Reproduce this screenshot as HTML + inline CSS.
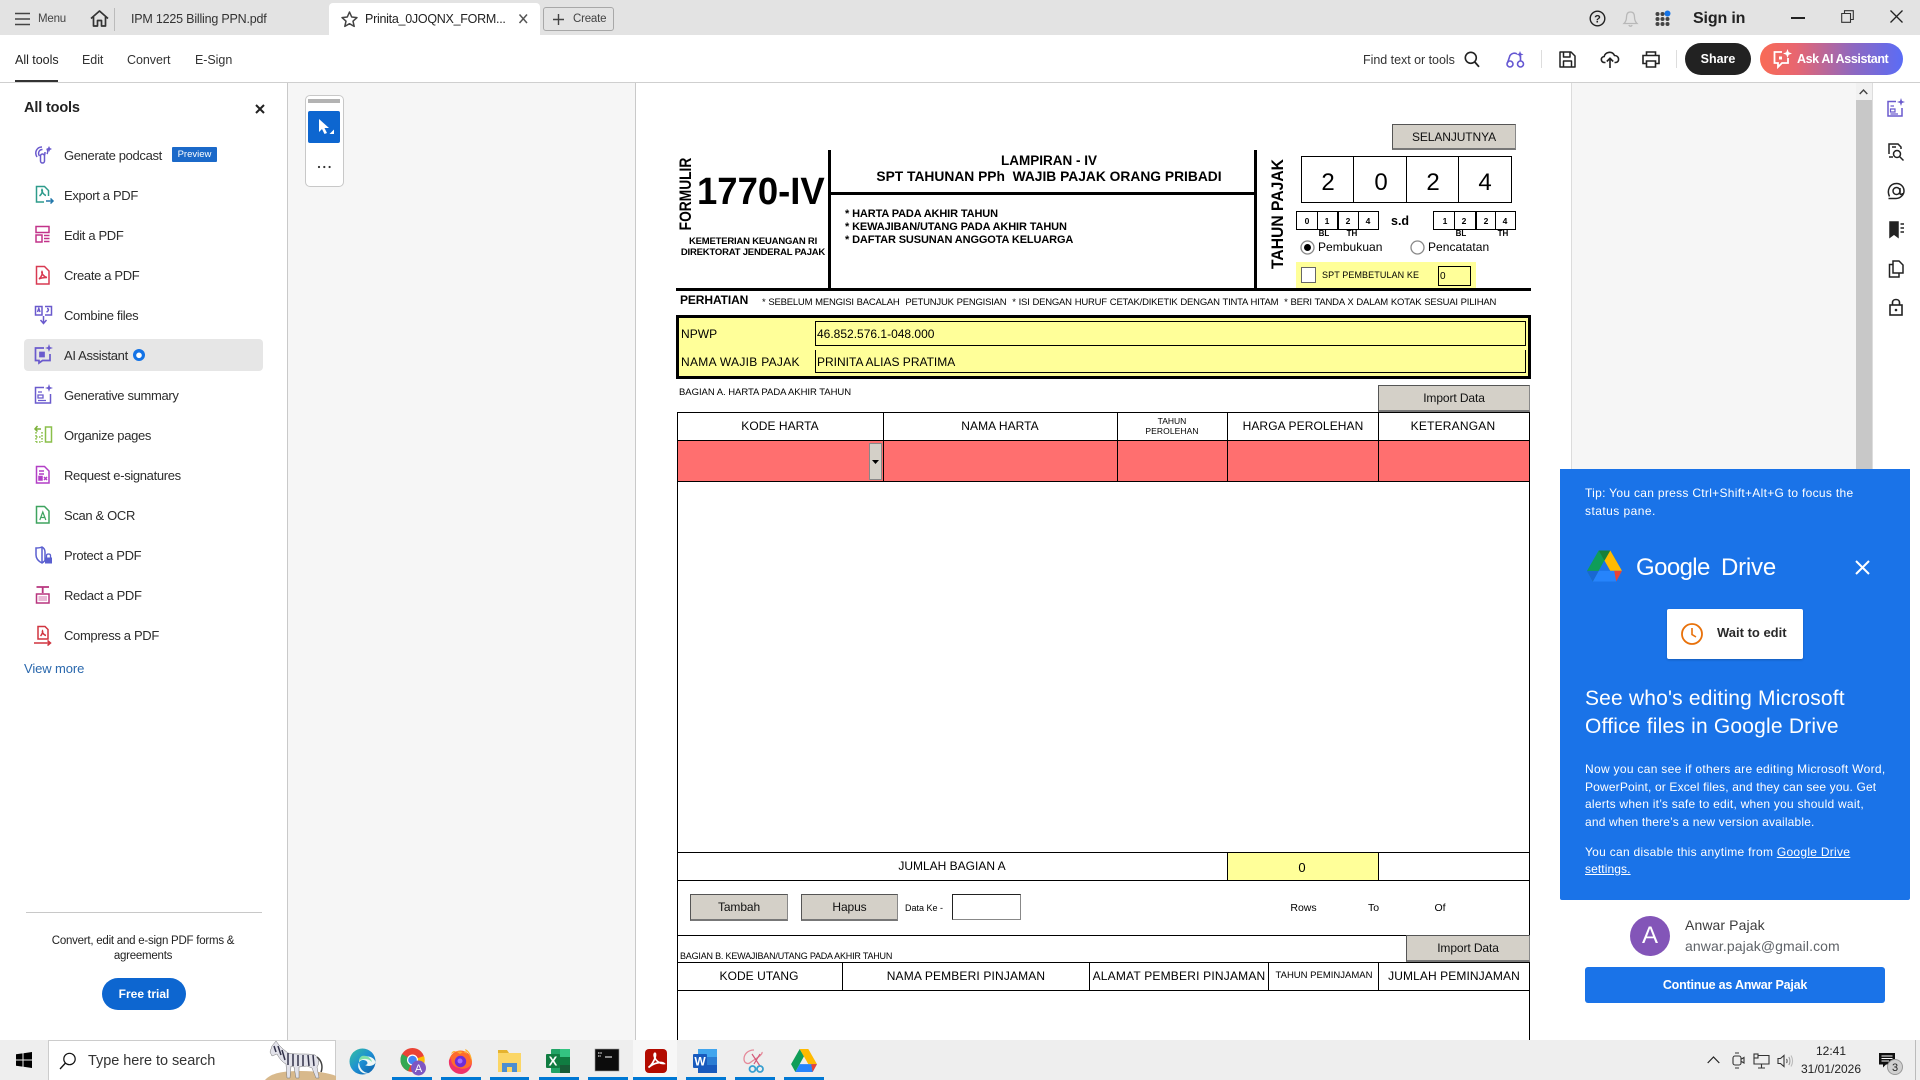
<!DOCTYPE html>
<html><head><meta charset="utf-8"><title>Acrobat</title>
<style>
*{box-sizing:border-box}
html,body{margin:0;padding:0;width:1920px;height:1080px;overflow:hidden;background:#fff;font-family:"Liberation Sans",Arial,sans-serif;color:#222}
.a{position:absolute}
.t{position:absolute;white-space:nowrap;line-height:20px;height:20px}
.c{position:absolute;white-space:nowrap;line-height:20px;height:20px;text-align:center;width:400px}
svg{position:absolute;overflow:visible}
.tool{font-size:13px;letter-spacing:-.34px;color:#2c2c2c;left:64px}
.ln{position:absolute;background:#000}
.btn{position:absolute;background:#d4d0c8;border:1px solid #555;border-bottom:2px solid #777;border-right:1px solid #888;text-align:center;font-size:12px;color:#111;letter-spacing:-.1px}
.f{color:#000}
.gd{color:#fff;font-size:12px}
.und{position:absolute;top:1077px;height:3px;background:#0078d4}
</style></head><body>

<!-- top bar -->
<div class="a" style="left:0;top:0;width:1920px;height:35px;background:#e3e3e3"></div>
<svg style="left:15px;top:12px" width="16" height="14"><path d="M0 1.5H15M0 7H15M0 12.5H15" stroke="#444" stroke-width="1.6"/></svg>
<div class="t" style="left:38px;top:9px;font-size:11.5px;letter-spacing:-.2px;color:#444">Menu</div>
<svg style="left:90px;top:10px" width="19" height="17"><path d="M1 8.5L9.5 1L18 8.5M3.5 7V16H7.5V10.5H11.5V16H15.5V7" fill="none" stroke="#333" stroke-width="1.7" stroke-linejoin="round"/></svg>
<div class="a" style="left:114px;top:8px;width:1px;height:23px;background:#bbb"></div>
<div class="t" style="left:131px;top:9px;font-size:12.5px;letter-spacing:-.2px;color:#333">IPM 1225 Billing PPN.pdf</div>
<div class="a" style="left:329px;top:3px;width:211px;height:32px;background:#fff;border-radius:4px 4px 0 0"></div>
<svg style="left:341px;top:11px" width="17" height="16"><path d="M8.5 1L10.7 6L16 6.6L12 10.2L13.2 15.4L8.5 12.7L3.8 15.4L5 10.2L1 6.6L6.3 6Z" fill="none" stroke="#444" stroke-width="1.5" stroke-linejoin="round"/></svg>
<div class="t" style="left:365px;top:9px;font-size:12.5px;letter-spacing:-.27px;color:#222">Prinita_0JOQNX_FORM...</div>
<svg style="left:519px;top:14px" width="9" height="10"><path d="M.5 .5L8 9M8 .5L.5 9" stroke="#555" stroke-width="1.5"/></svg>
<div class="a" style="left:543px;top:7px;width:71px;height:24px;border:1px solid #a8a8a8;border-radius:3px"></div>
<svg style="left:553px;top:14px" width="11" height="11"><path d="M5.5 0V11M0 5.5H11" stroke="#444" stroke-width="1.4"/></svg>
<div class="t" style="left:573px;top:9px;font-size:11.5px;letter-spacing:-.2px;color:#444">Create</div>

<!-- top right -->
<svg style="left:1589px;top:10px" width="17" height="17"><circle cx="8.5" cy="8.5" r="7.3" fill="none" stroke="#222" stroke-width="1.4"/><text x="8.5" y="12.5" font-size="11" font-weight="700" text-anchor="middle" fill="#222" font-family="Liberation Sans">?</text></svg>
<svg style="left:1623px;top:11px" width="15" height="17"><path d="M7.5 1C4.500 1 3.500 3 3.500 6C3.500 9 2.500 11 1 12.500H14C12.500 11 11.500 9 11.500 6C11.500 3 10.500 1 7.5 1ZM6 14C6.300 15.600 8.700 15.600 9 14" fill="none" stroke="#b8b8b8" stroke-width="1.3"/></svg>
<svg style="left:1655px;top:10px" width="16" height="17"><g fill="#444"><circle cx="2.5" cy="4" r="2"/><circle cx="7.5" cy="4" r="2"/><circle cx="2.5" cy="9" r="2"/><circle cx="7.5" cy="9" r="2"/><circle cx="12.5" cy="9" r="2"/><circle cx="2.5" cy="14" r="2"/><circle cx="7.5" cy="14" r="2"/><circle cx="12.5" cy="14" r="2"/></g><circle cx="12.5" cy="3.5" r="3" fill="#1473e6"/></svg>
<div class="t" style="left:1693px;top:9px;font-size:16px;font-weight:700;letter-spacing:-.15px;color:#222">Sign in</div>
<div class="a" style="left:1791px;top:17px;width:14px;height:1.5px;background:#222"></div>
<svg style="left:1841px;top:10px" width="13" height="13"><path d="M.7 3.5H9.5V12.3H.7ZM3.5 3.5V.7H12.3V9.5H9.5" fill="none" stroke="#333" stroke-width="1.1"/></svg>
<svg style="left:1890px;top:10px" width="13" height="13"><path d="M.5 .5L12.5 12.5M12.5 .5L.5 12.5" stroke="#222" stroke-width="1.3"/></svg>

<!-- toolbar -->
<div class="a" style="left:0;top:82px;width:1920px;height:1px;background:#cfcfcf"></div>
<div class="t" style="left:15px;top:49.500px;font-size:12.5px;letter-spacing:-.02px;color:#222">All tools</div>
<div class="a" style="left:15px;top:80px;width:43px;height:2px;background:#333"></div>
<div class="t" style="left:82px;top:49.500px;font-size:12.5px;letter-spacing:-.05px;color:#333">Edit</div>
<div class="t" style="left:127px;top:49.500px;font-size:12.5px;letter-spacing:-.05px;color:#333">Convert</div>
<div class="t" style="left:195px;top:49.500px;font-size:12.5px;letter-spacing:-.05px;color:#333">E-Sign</div>

<div class="t" style="left:1363px;top:49.500px;font-size:12.5px;letter-spacing:-.03px;color:#333">Find text or tools</div>
<svg style="left:1464px;top:51px" width="16" height="17"><circle cx="6.8" cy="6.8" r="5.5" fill="none" stroke="#222" stroke-width="1.6"/><path d="M10.8 11L15 15.8" stroke="#222" stroke-width="1.8"/></svg>
<svg style="left:1506px;top:50px" width="19" height="19" fill="none" stroke="#6557d2" stroke-width="1.6"><circle cx="4" cy="14" r="3"/><circle cx="14.5" cy="14" r="3"/><path d="M1.500 13L4 5.500C6 3 9 2.500 11 4M14.500 11V6"/><path d="M14 1L15 3.500L17.500 4.500L15 5.500L14 8L13 5.500L10.500 4.500L13 3.500Z" fill="#6557d2" stroke="none"/></svg>
<div class="a" style="left:1541px;top:50px;width:1px;height:18px;background:#ddd"></div>
<svg style="left:1559px;top:51px" width="17" height="17"><path d="M1 1H12L16 5V16H1ZM4.500 1V6H11V1M4.500 16V10H12.500V16" fill="none" stroke="#222" stroke-width="1.5" stroke-linejoin="round"/></svg>
<svg style="left:1600px;top:50px" width="20" height="19"><path d="M5.500 12.500H4.500C.5 12.500 .2 7 4.200 6.500C5 2 12 .5 14.500 5.500C19.500 5.500 20 12.500 15.500 12.500H14.500M10 18V8.500M6.800 11.500L10 8.300L13.200 11.500" fill="none" stroke="#222" stroke-width="1.6"/></svg>
<svg style="left:1642px;top:51px" width="18" height="17"><path d="M4.500 4.500V1H13.500V4.500M4.500 12.500H1V4.500H17V12.500H13.500M4.500 10H13.500V16H4.500Z" fill="none" stroke="#222" stroke-width="1.6"/></svg>
<div class="a" style="left:1676px;top:50px;width:1px;height:18px;background:#ddd"></div>
<div class="a" style="left:1685px;top:43px;width:66px;height:32px;border-radius:16px;background:#222;color:#fff;font-size:12.5px;font-weight:700;text-align:center;line-height:32px">Share</div>
<div class="a" style="left:1760px;top:43px;width:143px;height:32px;border-radius:16px;background:linear-gradient(90deg,#f96b55 0%,#e86670 25%,#8e68c0 65%,#5a6cf6 100%)"></div>
<svg style="left:1773px;top:49px" width="19" height="20"><path d="M9 3H1.500V14H5V18L9 14H15V9" fill="none" stroke="#fff" stroke-width="1.8"/><rect x="6" y="7.5" width="3" height="3" fill="#fff"/><path d="M14.500 0L15.700 3.300L19 4.500L15.700 5.700L14.500 9L13.300 5.700L10 4.500L13.300 3.300Z" fill="#fff"/></svg>
<div class="t" style="left:1797px;top:49px;font-size:12.5px;font-weight:700;letter-spacing:-.4px;color:#fff">Ask AI Assistant</div>

<!-- sidebar -->
<div class="a" style="left:287px;top:83px;width:1px;height:957px;background:#c9c9c9"></div>
<div class="a" style="left:288px;top:83px;width:347px;height:957px;background:#f6f6f6"></div>
<div class="a" style="left:635px;top:83px;width:1px;height:957px;background:#c9c9c9"></div>
<div class="t" style="left:24px;top:97.500px;font-size:14.5px;font-weight:700;letter-spacing:-.15px;color:#222">All tools</div>
<svg style="left:255px;top:104px" width="10" height="10"><path d="M1 1L9 9M9 1L1 9" stroke="#222" stroke-width="2"/></svg>

<div class="a" style="left:24px;top:339px;width:239px;height:32px;background:#e6e6e6;border-radius:4px"></div>

<div class="t tool" style="top:146px">Generate podcast</div>
<div class="a" style="left:172px;top:147px;width:45px;height:15px;background:#1b69c9;border-radius:1px;color:#fff;font-size:9.5px;text-align:center;line-height:15px">Preview</div>
<div class="t tool" style="top:186px">Export a PDF</div>
<div class="t tool" style="top:226px">Edit a PDF</div>
<div class="t tool" style="top:266px">Create a PDF</div>
<div class="t tool" style="top:306px">Combine files</div>
<div class="t tool" style="top:346px">AI Assistant</div>
<svg style="left:132px;top:348px" width="14" height="14"><circle cx="7" cy="7" r="6" fill="#1473e6"/><circle cx="7" cy="7.3" r="2.8" fill="#fff"/></svg>
<div class="t tool" style="top:386px">Generative summary</div>
<div class="t tool" style="top:426px">Organize pages</div>
<div class="t tool" style="top:466px">Request e-signatures</div>
<div class="t tool" style="top:506px">Scan &amp; OCR</div>
<div class="t tool" style="top:546px">Protect a PDF</div>
<div class="t tool" style="top:586px">Redact a PDF</div>
<div class="t tool" style="top:626px">Compress a PDF</div>
<div class="t" style="left:24px;top:659px;font-size:13px;letter-spacing:-.1px;color:#2a68ad">View more</div>

<!-- sidebar icons -->
<svg style="left:34px;top:145px" width="19" height="20" fill="none" stroke="#6a5acd" stroke-width="1.5"><path d="M3 12C0 7 3 2 8 2M5.500 11C3.500 8 5 4.500 8.500 4.500"/><rect x="6.5" y="9" width="4" height="9" rx="2"/><path d="M11 7C11 9 11 10 10 11M13 9C14 7 14 6 13 4"/><path d="M15 1L16 3L18 4L16 5L15 7L14 5L12 4L14 3Z" fill="#6a5acd" stroke="none"/></svg>
<svg style="left:35px;top:185px" width="19" height="20" fill="none" stroke="#2d9b8b" stroke-width="1.5"><path d="M9 17H1.500V1.500H9.500L13.500 5.500V11"/><path d="M4.500 11C7 9 8 6 7 4.500C6 6 9 10 11 10.500"/><path d="M11 16H18M15.500 13.500L18 16L15.500 18.500" stroke="#2277aa"/></svg>
<svg style="left:35px;top:225px" width="16" height="20" fill="none" stroke="#c2338a" stroke-width="1.5"><rect x="1" y="1.5" width="13" height="6"/><rect x="1" y="10" width="6" height="7"/><path d="M9 10.500H14.500M9 13.500H14.500M9 16.500H14.500"/></svg>
<svg style="left:35px;top:265px" width="16" height="21" fill="none" stroke="#d83a52" stroke-width="1.5"><path d="M1.500 1.500H9.500L14 6V19H1.500Z"/><path d="M4 14C6.500 12 8 8 7 6.500C6 8 9 12 12 12.500C9.500 12.500 6 13 4 14Z"/></svg>
<svg style="left:34px;top:305px" width="19" height="21" fill="none" stroke="#6a5acd" stroke-width="1.5"><path d="M8 10H1.500V1.500H8ZM11 1.500H17.500V10H11"/><path d="M9.500 11V18M6.500 15L9.500 18.500L12.500 15"/><path d="M3.500 7L4.800 3.500L6 7M12.500 7C15 6 15 3.500 13 3.500"/></svg>
<svg style="left:34px;top:344px" width="19" height="21" fill="none" stroke="#6a5acd" stroke-width="1.7"><path d="M10 4H1.500V16.500H5V19L8.500 16.500H16V10"/><rect x="6" y="8.5" width="4" height="4" fill="#6a5acd"/><path d="M15 0L16 3L19 4L16 5L15 8L14 5L11 4L14 3Z" fill="#6a5acd" stroke="none"/></svg>
<svg style="left:34px;top:384px" width="19" height="21" fill="none" stroke="#6a5acd" stroke-width="1.5"><path d="M10 3.500H1.500V19H16.500V10"/><path d="M4 8H8M4 11H9V14H4ZM4 16.500H12" stroke-width="1.3"/><path d="M15 0L16 3L19 4L16 5L15 8L14 5L11 4L14 3Z" fill="#6a5acd" stroke="none"/></svg>
<svg style="left:34px;top:424px" width="19" height="20" fill="none" stroke="#8abf4a" stroke-width="1.5"><rect x="11.5" y="3" width="6" height="15"/><path d="M2 18H8M2 8V18M8 8V18M2 13H8" stroke-dasharray="1.6 1.4"/><path d="M1 5H7M3.500 2L1 5L3.500 7.500" stroke="#7cb13a"/></svg>
<svg style="left:35px;top:465px" width="16" height="20" fill="none" stroke="#b23fc6" stroke-width="1.5"><path d="M1.500 1.500H9.500L14 6V18H1.500Z"/><path d="M4 6H9M4 9H9"/><rect x="4" y="11.5" width="3" height="3.5" fill="#b23fc6"/><path d="M9 12L12 15M12 12L9 15"/></svg>
<svg style="left:35px;top:505px" width="16" height="20" fill="none" stroke="#3ea35f" stroke-width="1.5"><path d="M1.500 1.500H9.500L14 6V18H1.500Z"/><path d="M4.800 15L7.800 7L10.800 15M5.800 12.500H9.800" stroke-width="1.2"/></svg>
<svg style="left:34px;top:545px" width="19" height="20" fill="none" stroke="#5a5fd0" stroke-width="1.5"><path d="M8 2C6 3 4 3 2 3V10C2 13 4 16 8 18C9.500 17 11 16 11 15V7C11 5 10 3 8 2ZM8 2V18"/><rect x="11" y="12.5" width="7" height="6" fill="#5a5fd0" stroke="none"/><path d="M12.500 12.500V10.500C12.500 8.500 16.500 8.500 16.500 10.500V12.500" stroke-width="1.3"/></svg>
<svg style="left:35px;top:585px" width="16" height="20" fill="none" stroke="#b8357f" stroke-width="1.5"><path d="M1.500 2H14M7.700 2V8" stroke-width="1.8"/><rect x="1.5" y="9" width="12.5" height="9"/><rect x="3.5" y="11" width="8.5" height="5" fill="#eab8d6" stroke="none"/></svg>
<svg style="left:34px;top:625px" width="18" height="21" fill="none" stroke="#d0343f" stroke-width="1.5"><path d="M4 1.500H11L14 4.500V14H4Z"/><path d="M6.500 11C8 9.500 9 7 8.500 6C8 7 9.500 10 12 10.500"/><path d="M0 18H16M13.500 15.500L16.500 18L13.500 20.500"/></svg>

<!-- sidebar bottom -->
<div class="a" style="left:26px;top:912px;width:236px;height:1px;background:#c8c8c8"></div>
<div class="c" style="left:-57px;top:930.500px;font-size:11.5px;letter-spacing:-.24px;color:#222">Convert, edit and e-sign PDF forms &amp;</div>
<div class="c" style="left:-57px;top:945.500px;font-size:11.5px;letter-spacing:-.24px;color:#222">agreements</div>
<div class="a" style="left:102px;top:978px;width:84px;height:32px;border-radius:16px;background:#0d66d0;color:#fff;font-size:12px;font-weight:700;text-align:center;line-height:32px">Free trial</div>

<!-- floating tools -->
<div class="a" style="left:305px;top:95px;width:39px;height:92px;background:#fff;border:1px solid #c8c8c8;border-radius:5px"></div>
<div class="a" style="left:308px;top:99px;width:32px;height:4px;background:#b3b3b3"></div>
<div class="a" style="left:308px;top:111px;width:32px;height:32px;background:#0d66d0;border-radius:2px"></div>
<svg style="left:318px;top:118px" width="18" height="20"><path d="M1 1V14L4 11L6.500 16L9 15L6.500 10H11Z" fill="#fff"/><path d="M16 16V11.500L11.500 16Z" fill="#fff"/></svg>
<svg style="left:317px;top:165px" width="15" height="4"><circle cx="2" cy="2" r="1.1" fill="#333"/><circle cx="7.3" cy="2" r="1.1" fill="#333"/><circle cx="12.6" cy="2" r="1.1" fill="#333"/></svg>

<!-- right panel -->
<div class="a" style="left:636px;top:83px;width:935px;height:957px;background:#fff"></div>
<div class="a" style="left:1571px;top:83px;width:1px;height:957px;background:#dcdcdc"></div>
<div class="a" style="left:1572px;top:83px;width:284px;height:957px;background:#f6f6f6"></div>
<div class="a" style="left:1856px;top:83px;width:16px;height:957px;background:#f1f1f1"></div>
<div class="a" style="left:1856px;top:100px;width:16px;height:400px;background:#c8c8c8"></div>
<svg style="left:1859px;top:89px" width="9" height="6"><path d="M.7 5L4.500 1L8.300 5" fill="none" stroke="#444" stroke-width="1.4"/></svg>
<div class="a" style="left:1872px;top:83px;width:1px;height:957px;background:#ddd"></div>

<!-- right rail icons -->
<svg style="left:1887px;top:98px" width="18" height="20" fill="none" stroke="#6a5acd" stroke-width="1.5"><path d="M9 3.500H1V18H15V10"/><path d="M3.500 8H7M3.500 11H8V14H3.500ZM3.500 16H11" stroke-width="1.2"/><path d="M14 0L15 3L18 4L15 5L14 8L13 5L10 4L13 3Z" fill="#6a5acd" stroke="none"/></svg>
<svg style="left:1887px;top:142px" width="18" height="20" fill="none" stroke="#222" stroke-width="1.5"><path d="M2 12V2H11L14 5V7M5 5H9M2 15H6"/><circle cx="10" cy="12" r="3.5"/><path d="M12.500 14.500L16.500 18.500"/></svg>
<svg style="left:1887px;top:182px" width="18" height="18" fill="none" stroke="#222" stroke-width="1.5"><path d="M2.500 14.500C-.5 8 3 1.500 9.500 1.500C14 1.500 17 5 17 9C17 13 13 16.500 9 16.500H1.500"/><circle cx="9.5" cy="9" r="3.5"/><path d="M13 6V11C13 13 15 13 15.500 11"/></svg>
<svg style="left:1888px;top:221px" width="17" height="18" fill="none" stroke="#222" stroke-width="1.5"><path d="M2 1H10V16L6 13L2 16Z" fill="#222"/><path d="M12.500 3H16M12.500 7H16M12.500 11H16"/></svg>
<svg style="left:1888px;top:260px" width="16" height="18" fill="none" stroke="#222" stroke-width="1.5"><path d="M5 1H11L15 5V13H5Z"/><path d="M5 4.500H1.500V17H11V13"/></svg>
<svg style="left:1889px;top:298px" width="14" height="18" fill="none" stroke="#222" stroke-width="1.6"><rect x="1" y="7" width="12" height="10"/><path d="M3.500 7V4.500C3.500 .5 10.500 .5 10.500 4.500V7"/><circle cx="7" cy="12" r="1.3" fill="#222" stroke="none"/></svg>

<!-- FORM header -->
<div class="a f" style="left:636px;top:184px;width:100px;height:20px;line-height:20px;text-align:center;font-size:17px;font-weight:700;white-space:nowrap;transform:rotate(-90deg) scaleX(.81)">FORMULIR</div>
<div class="t f" style="left:697px;top:177px;height:30px;line-height:30px;font-size:38px;font-weight:700;transform:scaleX(.96);transform-origin:0 50%">1770-IV</div>
<div class="c f" style="left:553px;top:232px;font-size:9.5px;font-weight:700;letter-spacing:-.2px">KEMETERIAN KEUANGAN RI</div>
<div class="c f" style="left:553px;top:243px;font-size:9.5px;font-weight:700;letter-spacing:-.2px">DIREKTORAT JENDERAL PAJAK</div>
<div class="ln" style="left:828px;top:150px;width:3px;height:140px"></div>
<div class="ln" style="left:1254px;top:150px;width:3px;height:140px"></div>
<div class="ln" style="left:830px;top:192px;width:425px;height:3px"></div>
<div class="ln" style="left:676px;top:288px;width:855px;height:3px"></div>
<div class="c f" style="left:849px;top:150.500px;font-size:13.5px;font-weight:700">LAMPIRAN - IV</div>
<div class="c f" style="left:849px;top:166.500px;font-size:13.8px;font-weight:700">SPT TAHUNAN PPh&nbsp; WAJIB PAJAK ORANG PRIBADI</div>
<div class="t f" style="left:845px;top:203.500px;font-size:11px;font-weight:700;letter-spacing:-.12px">* HARTA PADA AKHIR TAHUN</div>
<div class="t f" style="left:845px;top:216.500px;font-size:11px;font-weight:700;letter-spacing:-.12px">* KEWAJIBAN/UTANG PADA AKHIR TAHUN</div>
<div class="t f" style="left:845px;top:229.500px;font-size:11px;font-weight:700;letter-spacing:-.12px">* DAFTAR SUSUNAN ANGGOTA KELUARGA</div>

<div class="a f" style="left:1198px;top:204px;width:160px;height:20px;line-height:20px;text-align:center;font-size:16.5px;font-weight:700;white-space:nowrap;transform:rotate(-90deg) scaleX(.95)">TAHUN PAJAK</div>

<div class="btn" style="left:1392px;top:124px;width:124px;height:26px;line-height:24px">SELANJUTNYA</div>

<div class="a" style="left:1301px;top:156px;width:211px;height:47px;border:1px solid #000"></div>
<div class="ln" style="left:1353px;top:156px;width:1px;height:47px"></div>
<div class="ln" style="left:1406px;top:156px;width:1px;height:47px"></div>
<div class="ln" style="left:1458px;top:156px;width:1px;height:47px"></div>
<div class="c f" style="left:1128px;top:173px;font-size:24px">2</div>
<div class="c f" style="left:1181px;top:173px;font-size:24px">0</div>
<div class="c f" style="left:1233px;top:173px;font-size:24px">2</div>
<div class="c f" style="left:1285px;top:173px;font-size:24px">4</div>

<div class="a" style="left:1296px;top:211px;width:83px;height:19px;border:1px solid #000"></div>
<div class="ln" style="left:1317px;top:211px;width:1px;height:19px"></div>
<div class="ln" style="left:1337px;top:211px;width:2px;height:19px"></div>
<div class="ln" style="left:1358px;top:211px;width:1px;height:19px"></div>
<div class="a" style="left:1433px;top:211px;width:83px;height:19px;border:1px solid #000"></div>
<div class="ln" style="left:1454px;top:211px;width:1px;height:19px"></div>
<div class="ln" style="left:1475px;top:211px;width:2px;height:19px"></div>
<div class="ln" style="left:1495px;top:211px;width:1px;height:19px"></div>
<div class="c f" style="left:1107px;top:211px;font-size:8.5px;font-weight:700">0</div>
<div class="c f" style="left:1127px;top:211px;font-size:8.5px;font-weight:700">1</div>
<div class="c f" style="left:1148px;top:211px;font-size:8.5px;font-weight:700">2</div>
<div class="c f" style="left:1168px;top:211px;font-size:8.5px;font-weight:700">4</div>
<div class="c f" style="left:1245px;top:211px;font-size:8.5px;font-weight:700">1</div>
<div class="c f" style="left:1264px;top:211px;font-size:8.5px;font-weight:700">2</div>
<div class="c f" style="left:1286px;top:211px;font-size:8.5px;font-weight:700">2</div>
<div class="c f" style="left:1305px;top:211px;font-size:8.5px;font-weight:700">4</div>
<div class="t f" style="left:1391px;top:211px;font-size:12.5px;font-weight:700">s.d</div>
<div class="c f" style="left:1124px;top:224px;font-size:8px;font-weight:700">BL</div>
<div class="c f" style="left:1152px;top:224px;font-size:8px;font-weight:700">TH</div>
<div class="c f" style="left:1261px;top:224px;font-size:8px;font-weight:700">BL</div>
<div class="c f" style="left:1303px;top:224px;font-size:8px;font-weight:700">TH</div>

<svg style="left:1300px;top:240px" width="16" height="16"><circle cx="7.5" cy="7.5" r="6.5" fill="#fff" stroke="#888" stroke-width="1.3"/><circle cx="7.5" cy="7.5" r="3.5" fill="#000"/></svg>
<div class="t f" style="left:1318px;top:237px;font-size:12px;letter-spacing:.05px">Pembukuan</div>
<svg style="left:1410px;top:240px" width="16" height="16"><circle cx="7.5" cy="7.5" r="6.5" fill="#fff" stroke="#888" stroke-width="1.3"/></svg>
<div class="t f" style="left:1428px;top:237px;font-size:12px;letter-spacing:.05px">Pencatatan</div>

<div class="a" style="left:1296px;top:262px;width:180px;height:26px;background:#ffff99"></div>
<div class="a" style="left:1301px;top:267px;width:15px;height:16px;background:#fff;border:1.5px solid #666"></div>
<div class="t f" style="left:1322px;top:265px;font-size:9px;letter-spacing:.1px">SPT PEMBETULAN KE</div>
<div class="a" style="left:1438px;top:266px;width:33px;height:20px;border:1px solid #000"></div>
<div class="t f" style="left:1440px;top:267px;font-size:10px">0</div>

<div class="t f" style="left:680px;top:290px;font-size:12px;font-weight:700;letter-spacing:-.1px">PERHATIAN</div>
<div class="t f" style="left:762px;top:293px;font-size:9.5px;letter-spacing:-.22px;word-spacing:.5px">* SEBELUM MENGISI BACALAH&nbsp; PETUNJUK PENGISIAN&nbsp; * ISI DENGAN HURUF CETAK/DIKETIK DENGAN TINTA HITAM&nbsp; * BERI TANDA X DALAM KOTAK SESUAI PILIHAN</div>

<!-- NPWP -->
<div class="a" style="left:676px;top:315px;width:855px;height:64px;background:#ffff99;border:3px solid #000"></div>
<div class="a" style="left:815px;top:321px;width:711px;height:25px;border:1px solid #000"></div>
<div class="a" style="left:815px;top:350px;width:711px;height:23px;border:1px solid #000;border-top:none"></div>
<div class="t f" style="left:681px;top:324px;font-size:12px;letter-spacing:.05px">NPWP</div>
<div class="t f" style="left:681px;top:352px;font-size:12px;letter-spacing:.3px">NAMA WAJIB PAJAK</div>
<div class="t f" style="left:817px;top:324px;font-size:12px">46.852.576.1-048.000</div>
<div class="t f" style="left:817px;top:352px;font-size:12px">PRINITA ALIAS PRATIMA</div>

<div class="t f" style="left:679px;top:383px;font-size:9.5px;letter-spacing:-.04px">BAGIAN A. HARTA PADA AKHIR TAHUN</div>
<div class="btn" style="left:1378px;top:385px;width:152px;height:27px;line-height:24px">Import Data</div>

<!-- table A -->
<div class="ln" style="left:677px;top:412px;width:853px;height:1px"></div>
<div class="ln" style="left:677px;top:440px;width:853px;height:1px"></div>
<div class="a" style="left:677px;top:441px;width:853px;height:40px;background:#ff6f6f"></div>
<div class="ln" style="left:677px;top:481px;width:853px;height:1px"></div>
<div class="ln" style="left:677px;top:412px;width:1px;height:628px"></div>
<div class="ln" style="left:1529px;top:412px;width:1px;height:628px"></div>
<div class="ln" style="left:883px;top:412px;width:1px;height:69px"></div>
<div class="ln" style="left:1117px;top:412px;width:1px;height:69px"></div>
<div class="ln" style="left:1227px;top:412px;width:1px;height:69px"></div>
<div class="ln" style="left:1378px;top:412px;width:1px;height:69px"></div>
<div class="a" style="left:869px;top:443px;width:13px;height:37px;background:#d4d0c8;border:1px solid #888"></div>
<svg style="left:872px;top:460px" width="7" height="4"><path d="M0 0H7L3.500 4Z" fill="#000"/></svg>
<div class="c f" style="left:580px;top:416px;font-size:12px;letter-spacing:.05px">KODE HARTA</div>
<div class="c f" style="left:800px;top:416px;font-size:12px;letter-spacing:.05px">NAMA HARTA</div>
<div class="c f" style="left:972px;top:410.500px;font-size:8.5px">TAHUN</div>
<div class="c f" style="left:972px;top:421px;font-size:8.5px;letter-spacing:.1px">PEROLEHAN</div>
<div class="c f" style="left:1103px;top:416px;font-size:12px;letter-spacing:.1px">HARGA PEROLEHAN</div>
<div class="c f" style="left:1253px;top:416px;font-size:12px;letter-spacing:.2px">KETERANGAN</div>

<div class="ln" style="left:677px;top:852px;width:853px;height:1px"></div>
<div class="ln" style="left:677px;top:880px;width:853px;height:1px"></div>
<div class="a" style="left:1228px;top:853px;width:150px;height:27px;background:#ffff99"></div>
<div class="ln" style="left:1227px;top:852px;width:1px;height:28px"></div>
<div class="ln" style="left:1378px;top:852px;width:1px;height:28px"></div>
<div class="c f" style="left:752px;top:856px;font-size:12px">JUMLAH BAGIAN A</div>
<div class="c f" style="left:1102px;top:858px;font-size:13px">0</div>

<div class="btn" style="left:690px;top:894px;width:98px;height:27px;line-height:24px">Tambah</div>
<div class="btn" style="left:801px;top:894px;width:97px;height:27px;line-height:24px">Hapus</div>
<div class="t f" style="left:905px;top:897.500px;font-size:9px">Data Ke -</div>
<div class="a" style="left:952px;top:894px;width:69px;height:26px;background:#fff;border:1px solid #222;border-bottom-color:#888;border-right-color:#888"></div>
<div class="c f" style="left:1103.500px;top:897.500px;font-size:10.5px">Rows</div>
<div class="c f" style="left:1173.500px;top:897.500px;font-size:10.5px">To</div>
<div class="c f" style="left:1240px;top:897.500px;font-size:10.5px">Of</div>

<div class="ln" style="left:677px;top:935px;width:729px;height:1px"></div>
<div class="btn" style="left:1406px;top:935px;width:124px;height:27px;line-height:24px">Import Data</div>
<div class="t f" style="left:680px;top:946px;font-size:9px;letter-spacing:-.2px">BAGIAN B. KEWAJIBAN/UTANG PADA AKHIR TAHUN</div>
<div class="ln" style="left:677px;top:962px;width:853px;height:1px"></div>
<div class="ln" style="left:677px;top:990px;width:853px;height:1px"></div>
<div class="ln" style="left:842px;top:962px;width:1px;height:28px"></div>
<div class="ln" style="left:1089px;top:962px;width:1px;height:28px"></div>
<div class="ln" style="left:1268px;top:962px;width:1px;height:28px"></div>
<div class="ln" style="left:1378px;top:962px;width:1px;height:28px"></div>
<div class="c f" style="left:559px;top:966px;font-size:12px;letter-spacing:.05px">KODE UTANG</div>
<div class="c f" style="left:766px;top:966px;font-size:12px;letter-spacing:.15px">NAMA PEMBERI PINJAMAN</div>
<div class="c f" style="left:979px;top:966px;font-size:12px;letter-spacing:.2px">ALAMAT PEMBERI PINJAMAN</div>
<div class="c f" style="left:1124px;top:965.500px;font-size:9.5px">TAHUN PEMINJAMAN</div>
<div class="c f" style="left:1254px;top:966px;font-size:12px;letter-spacing:.1px">JUMLAH PEMINJAMAN</div>

<!-- Google Drive panel -->
<div class="a" style="left:1560px;top:900px;width:350px;height:140px;background:#fff"></div>
<div class="a" style="left:1560px;top:469px;width:350px;height:431px;background:#1a73e8;border-radius:0 0 2px 2px"></div>
<div class="t gd" style="left:1585px;top:483px;letter-spacing:.3px">Tip: You can press Ctrl+Shift+Alt+G to focus the</div>
<div class="t gd" style="left:1585px;top:501px;letter-spacing:.45px">status pane.</div>
<svg style="left:1587px;top:550px" width="35" height="32" viewBox="0 0 36 32"><path d="M12 0L0 21L6 32L18 10Z" fill="#0f9d58"/><path d="M12 0H24L30 10.500H18Z" fill="#188038"/><path d="M24 0L36 21H24L18 10.500Z" fill="#ffba00"/><path d="M6 32H30L36 21H12Z" fill="#2684fc"/><path d="M30 32L36 21H28L30 32Z" fill="#ea4335"/><path d="M6 32L12 21L0 21Z" fill="#1967d2"/></svg>
<div class="t" style="left:1636px;top:558px;font-size:24px;letter-spacing:-.6px;color:#fff">Google</div>
<div class="t" style="left:1721px;top:558px;font-size:24px;letter-spacing:-.2px;color:#fff">Drive</div>
<svg style="left:1855px;top:560px" width="15" height="15"><path d="M1 1L14 14M14 1L1 14" stroke="#fff" stroke-width="2"/></svg>
<div class="a" style="left:1667px;top:609px;width:136px;height:50px;background:#fff;border-radius:2px;box-shadow:0 1px 2px rgba(0,0,0,.2)"></div>
<svg style="left:1680px;top:622px" width="24" height="24"><circle cx="12" cy="12" r="10" fill="none" stroke="#e8710a" stroke-width="1.8"/><path d="M12 6V12.500L16 15" fill="none" stroke="#e8710a" stroke-width="1.6"/></svg>
<div class="t" style="left:1717px;top:623px;font-size:13px;font-weight:700;color:#2a2a2a">Wait to edit</div>
<div class="t" style="left:1585px;top:689px;font-size:21px;letter-spacing:.18px;color:#fff">See who's editing Microsoft</div>
<div class="t" style="left:1585px;top:717px;font-size:21px;letter-spacing:.2px;color:#fff">Office files in Google Drive</div>
<div class="t gd" style="left:1585px;top:759px;letter-spacing:.3px">Now you can see if others are editing Microsoft Word,</div>
<div class="t gd" style="left:1585px;top:777px;letter-spacing:.16px">PowerPoint, or Excel files, and they can see you. Get</div>
<div class="t gd" style="left:1585px;top:794px;letter-spacing:.25px">alerts when it’s safe to edit, when you should wait,</div>
<div class="t gd" style="left:1585px;top:812px;letter-spacing:.17px">and when there’s a new version available.</div>
<div class="t gd" style="left:1585px;top:842px;letter-spacing:.28px">You can disable this anytime from <u>Google Drive</u></div>
<div class="t gd" style="left:1585px;top:859px;letter-spacing:.1px"><u>settings.</u></div>
<div class="a" style="left:1630px;top:916px;width:40px;height:40px;border-radius:50%;background:#8355b8;color:#fff;font-size:24px;text-align:center;line-height:40px">A</div>
<div class="t" style="left:1685px;top:915px;font-size:14px;letter-spacing:.1px;color:#3c3c3c">Anwar Pajak</div>
<div class="t" style="left:1685px;top:936px;font-size:14px;letter-spacing:.1px;color:#5f6368">anwar.pajak@gmail.com</div>
<div class="a" style="left:1585px;top:967px;width:300px;height:36px;border-radius:3px;background:#1a73e8;color:#fff;font-size:12.5px;font-weight:700;text-align:center;line-height:36px;letter-spacing:-.2px">Continue as Anwar Pajak</div>

<!-- taskbar -->
<div class="a" style="left:0;top:1040px;width:1920px;height:40px;background:#eeeeee"></div>
<svg style="left:16px;top:1052px" width="16" height="16"><path d="M0 2.300L6.500 1.400V7.500H0ZM7.500 1.200L16 0V7.500H7.500ZM0 8.500H6.500V14.600L0 13.700ZM7.500 8.500H16V16L7.500 14.800Z" fill="#000"/></svg>
<div class="a" style="left:48px;top:1040px;width:288px;height:40px;background:#fff;border:1px solid #ccc;border-bottom:none"></div>
<svg style="left:59px;top:1052px" width="18" height="18"><circle cx="10.5" cy="7" r="5.7" fill="none" stroke="#111" stroke-width="1.2"/><path d="M6.500 11L1 17" stroke="#111" stroke-width="1.3"/></svg>
<div class="t" style="left:88px;top:1051px;font-size:14.5px;letter-spacing:-.05px;color:#333">Type here to search</div>
<svg style="left:261px;top:1040px" width="75" height="40"><path d="M4 40C10 33 22 31 40 31C56 31 68 33 75 36V40Z" fill="#d8b98c"/><path d="M9 12L11 6L15 1L18 5L22 9L27 13C36 15 46 13 54 15C58 18 59 23 56 27L58 38H55L51 28L46 26L38 27L38 38H35L33 27L30 26L29 38H26L25 24C21 22 18 18 16 14L11 16Z" fill="#e2e2ea" stroke="#777" stroke-width=".5"/><path d="M17 6L20 15M21 10L24 20M27 13L27 25M32 14L32 26M37 15L37 26M42 15L42 26M47 15L48 26M52 15L53 26M13 6L15 12" stroke="#33334a" stroke-width="1.5"/><path d="M56 17C61 21 62 27 60 32" fill="none" stroke="#444" stroke-width="1.5"/></svg>

<!-- Edge -->
<svg style="left:349px;top:1048px" width="27" height="27" viewBox="0 0 27 27"><defs><linearGradient id="e1" x1="0" y1="0" x2="1" y2="1"><stop offset="0" stop-color="#35c2a0"/><stop offset=".5" stop-color="#1d8fd3"/><stop offset="1" stop-color="#0c5ea8"/></linearGradient></defs><circle cx="13.5" cy="13.5" r="13" fill="url(#e1)"/><path d="M10 13C10 7 24 6 26.500 14C26 18 19 19 16 17C20 17 19 12 14 12C10 12 8 17 10 21C12 25 16 26.500 20 25C14 25 10 20 10 13Z" fill="#eef7f6"/><path d="M13 8C18 7 22 10 23 14C19 10 14 10 10 13C10 11 11 9 13 8Z" fill="#7fe0a8"/></svg>
<!-- Chrome -->
<svg style="left:400px;top:1047px" width="28" height="30" viewBox="0 0 28 30"><circle cx="12.5" cy="13" r="12" fill="#ea4335"/><path d="M12.500 13L2 7A12 12 0 0 0 8 24Z" fill="#34a853"/><path d="M12.500 13L24 9A12 12 0 0 1 12 25Z" fill="#fbbc04"/><circle cx="12.5" cy="13" r="5.5" fill="#fff"/><circle cx="12.5" cy="13" r="4.3" fill="#4285f4"/><circle cx="18.5" cy="21" r="7.5" fill="#7e57c2"/><text x="18.5" y="25" text-anchor="middle" font-size="11" fill="#fff" font-family="Liberation Sans">A</text></svg>
<!-- Firefox -->
<svg style="left:448px;top:1048px" width="25" height="27" viewBox="0 0 25 27"><circle cx="12.5" cy="14" r="11.5" fill="#ff6b2c"/><path d="M3 6C5 1 8 3 12 6C16 3 20 1 22 9L24 14C24 8 21 2 17 1L19 6C15 3 8 2 3 6Z" fill="#ffb02e"/><path d="M1 12C0 20 6 26 13 26C18 26 23 22 24 15C22 20 16 22 11 20C6 19 3 16 3 10Z" fill="#f0326a"/><circle cx="12.5" cy="13.5" r="5.7" fill="#6e2bd9"/><circle cx="12" cy="13" r="2.5" fill="#a66cff"/></svg>
<!-- Explorer -->
<svg style="left:497px;top:1049px" width="25" height="24" viewBox="0 0 25 24"><path d="M1 1H10L12 4H1Z" fill="#e5b32e"/><rect x="1" y="4" width="23" height="19" fill="#fbd666"/><rect x="5" y="14" width="15" height="9" fill="#4c8ed0"/><rect x="10" y="18" width="5" height="5" fill="#fbd666"/></svg>
<!-- Excel -->
<svg style="left:546px;top:1048px" width="25" height="26" viewBox="0 0 25 26"><rect x="5" y="1" width="19" height="24" rx="1" fill="#21a366"/><rect x="14" y="1" width="10" height="8" fill="#33c481"/><rect x="5" y="9" width="19" height="8" fill="#107c41"/><rect x="14" y="17" width="10" height="8" fill="#185c37"/><rect x="0" y="6" width="14" height="14" rx="1" fill="#107c41"/><text x="7" y="17.5" text-anchor="middle" font-size="13" font-weight="700" fill="#fff" font-family="Liberation Sans">X</text></svg>
<!-- Terminal -->
<svg style="left:595px;top:1048px" width="24" height="24" viewBox="0 0 24 24"><rect x="0" y="1" width="24" height="22" fill="#0c0c0c" stroke="#999" stroke-width=".6"/><path d="M3 5H7M3 8H6" stroke="#ddd" stroke-width="1.2" stroke-dasharray="1.5 .8"/><path d="M10 9H17" stroke="#ddd" stroke-width="1.2"/></svg>
<!-- Acrobat -->
<div class="a" style="left:633px;top:1040px;width:44px;height:40px;background:#f7f7f7"></div>
<svg style="left:645px;top:1048px" width="22" height="26" viewBox="0 0 22 26"><rect x="0" y="1" width="22" height="24" rx="4" fill="#b30b00"/><path d="M3.500 19.500C7 17 11 10 10.500 6C10 4 8.500 6 9.500 9C11 13 15 16 19 15.500C17 13.500 9 14.500 3.500 19.500Z" fill="none" stroke="#fff" stroke-width="1.7"/></svg>
<!-- Word -->
<svg style="left:693px;top:1048px" width="25" height="26" viewBox="0 0 25 26"><rect x="5" y="1" width="19" height="24" rx="1" fill="#2b7cd3"/><rect x="5" y="1" width="19" height="8" fill="#41a5ee"/><rect x="5" y="17" width="19" height="8" fill="#185abd"/><rect x="0" y="6" width="14" height="14" rx="1" fill="#185abd"/><text x="7" y="17.5" text-anchor="middle" font-size="12" font-weight="700" fill="#fff" font-family="Liberation Sans">W</text></svg>
<!-- Snip -->
<svg style="left:742px;top:1048px" width="25" height="27" viewBox="0 0 25 27" fill="none"><path d="M12 2C6 2 2 6 2 11C2 15 6 17 9 14C13 11 21 7 20 4" stroke="#e58a9a" stroke-width="1.3"/><path d="M10 6L18 18M18 6L12 16" stroke="#d45a7a" stroke-width="1.2"/><circle cx="10.5" cy="21" r="3" stroke="#3aa0d0" stroke-width="1.8"/><circle cx="18" cy="21" r="3" stroke="#3aa0d0" stroke-width="1.8"/></svg>
<!-- Drive -->
<svg style="left:791px;top:1049px" width="26" height="23" viewBox="0 0 36 32"><path d="M12 0L0 21L6 32L18 10Z" fill="#0f9d58"/><path d="M12 0H24L36 21H24Z" fill="#ffba00"/><path d="M6 32H30L36 21H12Z" fill="#2684fc"/><path d="M30 32L36 21H28Z" fill="#ea4335"/></svg>

<div class="und" style="left:392px;width:40px"></div>
<div class="und" style="left:441px;width:40px"></div>
<div class="und" style="left:490px;width:39px"></div>
<div class="und" style="left:539px;width:40px"></div>
<div class="und" style="left:588px;width:40px"></div>
<div class="und" style="left:633px;width:44px"></div>
<div class="und" style="left:686px;width:40px"></div>
<div class="und" style="left:735px;width:40px"></div>
<div class="und" style="left:784px;width:40px"></div>

<!-- tray -->
<svg style="left:1707px;top:1056px" width="13" height="8"><path d="M.7 7L6.500 1L12.300 7" fill="none" stroke="#222" stroke-width="1.2"/></svg>
<svg style="left:1732px;top:1052px" width="13" height="17" fill="none" stroke="#333" stroke-width="1.1"><rect x="1" y="4" width="8" height="9" rx="2"/><path d="M3 1H7M3 16H7M9.500 7L12 5.500V11L9.500 9.500"/></svg>
<svg style="left:1753px;top:1053px" width="17" height="16" fill="none" stroke="#333" stroke-width="1.1"><rect x="1" y="1" width="4" height="4"/><path d="M5 2.500H16V11H1V5M8.500 11V15M5 15H12"/></svg>
<svg style="left:1777px;top:1054px" width="17" height="14" fill="none" stroke="#333" stroke-width="1.1"><path d="M1 4.500H3.500L7 1.500V12.500L3.500 9.500H1Z"/><path d="M9.500 5C10.300 6 10.300 8 9.500 9" stroke="#555"/><path d="M11.800 3C13.300 5 13.300 9 11.800 11" stroke="#999"/><path d="M14 1.500C16 5 16 9 14 12.500" stroke="#bbb"/></svg>
<div class="c" style="left:1631px;top:1041px;font-size:12px;color:#222">12:41</div>
<div class="c" style="left:1631px;top:1059px;font-size:12px;color:#222">31/01/2026</div>
<svg style="left:1879px;top:1052px" width="26" height="26"><path d="M0 1H16V12.500H7L4 15.500V12.500H0Z" fill="#111"/><path d="M2.500 4H13.500M2.500 6.500H13.500M2.500 9H10" stroke="#fff" stroke-width="1"/><circle cx="16" cy="15" r="7.5" fill="#d0d0d0" stroke="#999"/><text x="16" y="19" text-anchor="middle" font-size="11" fill="#222" font-family="Liberation Sans">3</text></svg>
<div class="a" style="left:1915px;top:1040px;width:1px;height:40px;background:#bbb"></div>
</body></html>
